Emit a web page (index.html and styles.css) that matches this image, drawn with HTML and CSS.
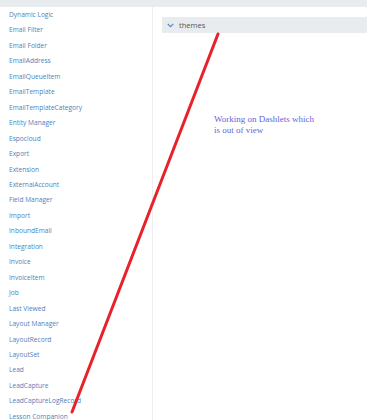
FILE: index.html
```html
<!DOCTYPE html>
<html lang="en">
<head>
    <meta charset="UTF-8">
    <title>Administration - Entities</title>
    <link rel="stylesheet" href="styles.css">
</head>
<body>
    <div class="top-bar"></div>

    <div class="layout">
        <!-- Entity list -->
        <ul class="side-list">
            <li><a href="#">Dynamic Logic</a></li>
            <li><a href="#">Email Filter</a></li>
            <li><a href="#">Email Folder</a></li>
            <li><a href="#">EmailAddress</a></li>
            <li><a href="#">EmailQueueItem</a></li>
            <li><a href="#">EmailTemplate</a></li>
            <li><a href="#">EmailTemplateCategory</a></li>
            <li><a href="#">Entity Manager</a></li>
            <li><a href="#">Espocloud</a></li>
            <li><a href="#">Export</a></li>
            <li><a href="#">Extension</a></li>
            <li><a href="#">ExternalAccount</a></li>
            <li><a href="#">Field Manager</a></li>
            <li><a href="#">Import</a></li>
            <li><a href="#">InboundEmail</a></li>
            <li><a href="#">Integration</a></li>
            <li><a href="#">Invoice</a></li>
            <li><a href="#">InvoiceItem</a></li>
            <li><a href="#">Job</a></li>
            <li><a href="#">Last Viewed</a></li>
            <li><a href="#">Layout Manager</a></li>
            <li><a href="#">LayoutRecord</a></li>
            <li><a href="#">LayoutSet</a></li>
            <li><a href="#">Lead</a></li>
            <li><a href="#">LeadCapture</a></li>
            <li><a href="#">LeadCaptureLogRecord</a></li>
            <li><a href="#">Lesson Companion</a></li>
        </ul>

        <!-- Main panel -->
        <div class="main">
            <div class="panel-head">
                <svg class="chevron" width="7" height="5" viewBox="0 0 7 5">
                    <path d="M0.8 1 L3.5 3.6 L6.2 1" fill="none" stroke="#5b8fc9" stroke-width="1.3"/>
                </svg>
                <span>themes</span>
            </div>
            <div class="note">Working on Dashlets which<br>is out of view</div>
        </div>
    </div>

    <!-- annotation stroke drawn over the screenshot -->
    <svg class="mark" width="367" height="420" viewBox="0 0 367 420">
        <line x1="218" y1="34" x2="72" y2="412" stroke="#e8222b" stroke-width="3" stroke-linecap="round"/>
    </svg>
</body>
</html>
```

FILE: styles.css
```css
body {
    margin: 0;
    font-family: "Open Sans", Arial, sans-serif;
    background-color: #fff;
    overflow: hidden;
    height: 420px;
}

.top-bar {
    height: 7px;
    background-color: #e9ecee;
}

.layout {
    display: flex;
}

.side-list {
    list-style: none;
    margin: 0;
    padding: 0 0 0 9px;
    width: 143px;
    border-right: 1px solid #eceeef;
    height: 420px;
}

.side-list li {
    height: 15.46px;
    line-height: 15.46px;
    font-size: 6.6px;
    white-space: nowrap;
}

.side-list a {
    color: #4f7fba;
    text-decoration: none;
}

.main {
    flex: 1;
    padding: 10px 0 0 9px;
}

.panel-head {
    display: flex;
    align-items: center;
    gap: 5px;
    height: 16px;
    padding-left: 5px;
    background-color: #e9ecee;
    font-size: 7.5px;
    color: #555;
}

.chevron {
    display: block;
}

.note {
    margin: 81px 0 0 52px;
    font-family: "Liberation Serif", "Times New Roman", serif;
    font-size: 9px;
    line-height: 10.5px;
    color: #6466d8;
}

.mark {
    position: absolute;
    top: 0;
    left: 0;
    pointer-events: none;
}
```
